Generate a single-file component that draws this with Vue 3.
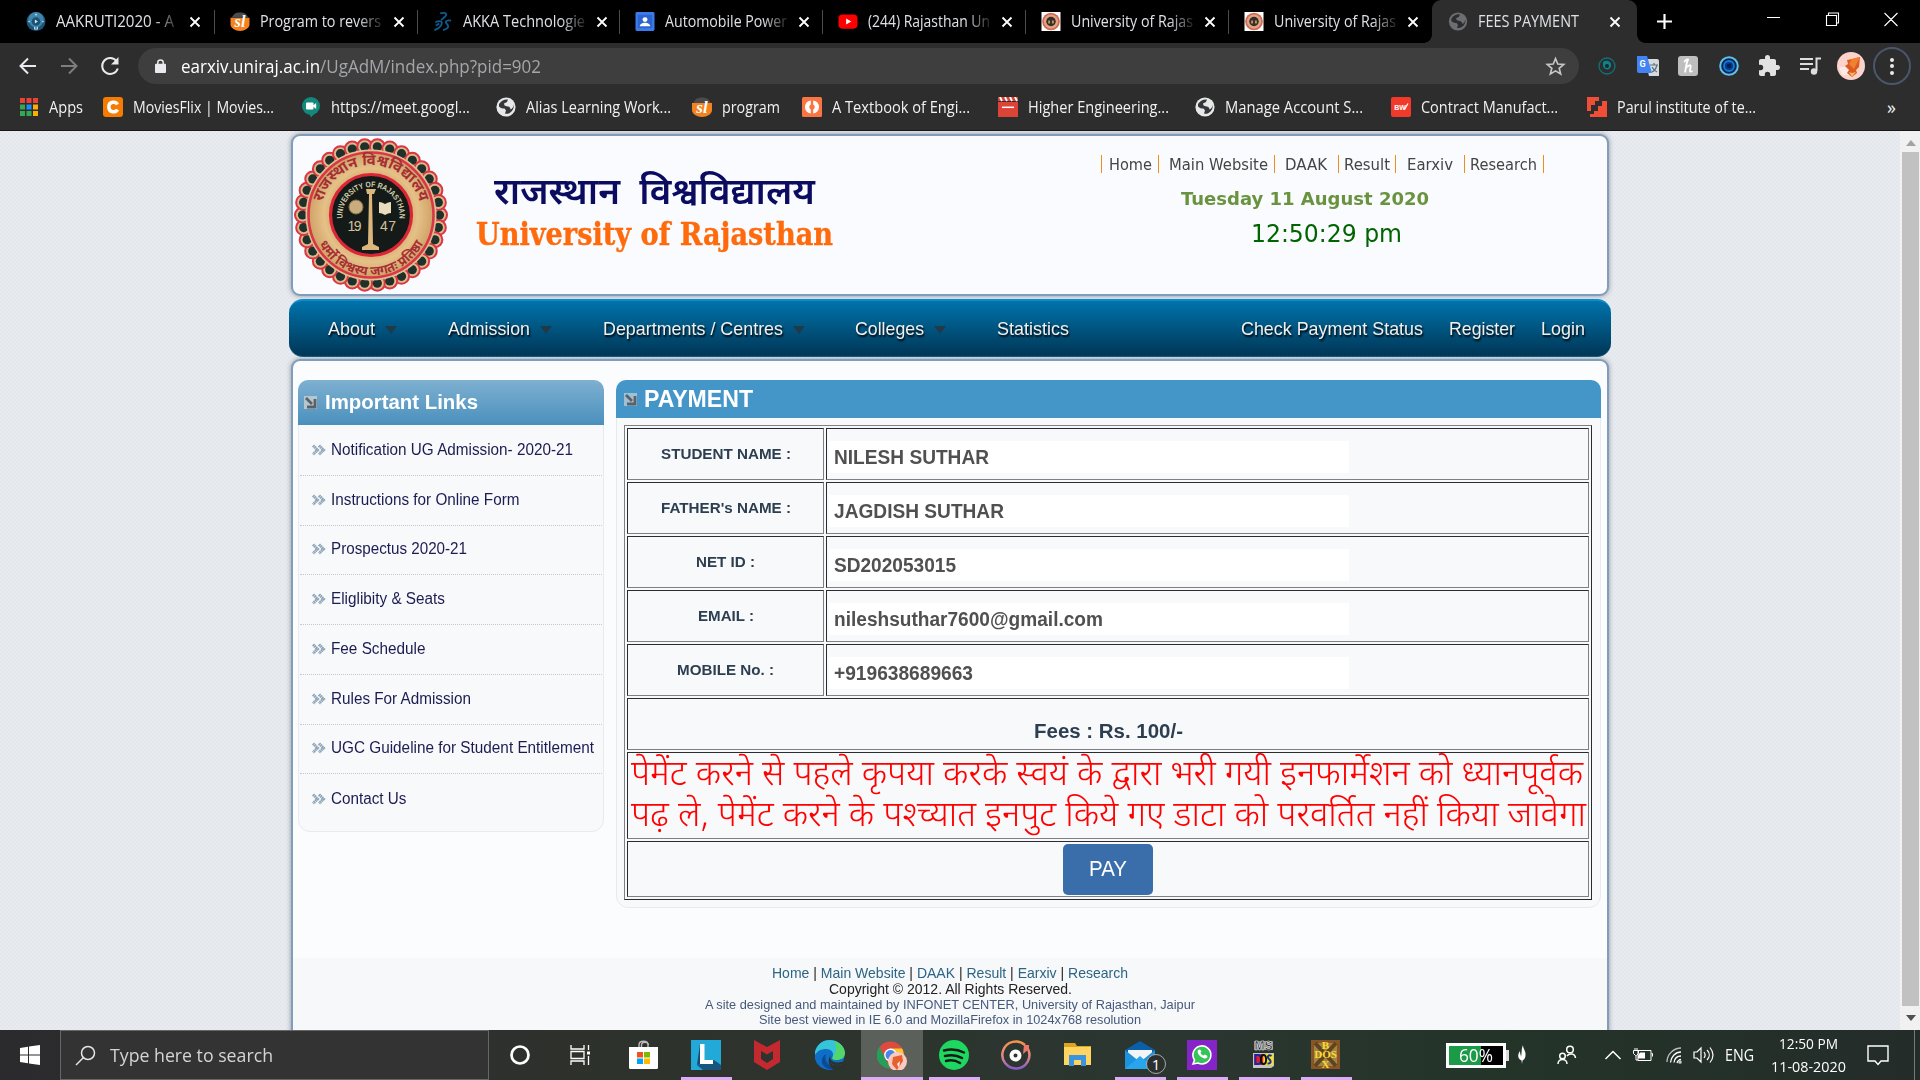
<script setup>
// Stretches a run of text horizontally so it occupies exactly the given width.
const vFit = {
  mounted(el, { value }) {
    el.style.display = 'inline-block'
    el.style.whiteSpace = 'nowrap'
    const natural = el.getBoundingClientRect().width
    if (!value || !natural) return
    el.style.transformOrigin = '0 50%'
    el.style.transform = `scaleX(${value / natural})`
    el.style.marginRight = `${value - natural}px`
  },
}

const globe = (bg, fg) =>
  `<circle cx="10" cy="10" r="9.6" fill="${bg}"/><path d="M3 7c2-3 5-5 9-4.500l-1 2.500-3 1.500.5 2 3 1c2 0 3 1.500 3 3 2-1 3-2.500 3.200-5 .5 3-.8 6.500-4 8.500-2 1-3.500 1-4.700.6l1-3-1.500-2c-2 0-4-.5-5.500-2.100z" fill="${fg}"/>`
const slIcon = `<path d="M0 6h20v7c0 4-5 7-10 7S0 17 0 13z" fill="#f58220"/><path d="M1 6 4 2c3-2 9-2 12 0l3 4z" fill="#4b4b4b"/><text x="10" y="16" text-anchor="middle" font-family="Liberation Serif" font-style="italic" font-weight="700" font-size="17" fill="#fff">sl</text>`
const sealIcon = `<rect width="20" height="20" fill="#fff"/><circle cx="10" cy="10" r="9.300" fill="#cf6a55"/><circle cx="10" cy="10" r="7.500" fill="#e0a583"/><circle cx="10" cy="10" r="5" fill="#3a2b24"/><path d="M7 9h2v3H7zM11 9h2v3h-2z" fill="#b09a70"/>`

const icons = {
  aakruti: `<circle cx="10" cy="10" r="10" fill="#1c5578"/><circle cx="10" cy="8" r="8" fill="#3f86ad"/><circle cx="10" cy="10" r="4.500" fill="#1d4f70"/><path d="M8.800 7.800 12 10l-3.200 2.200z" fill="#cfe6f2"/><path d="m10 1.500 1.500 2h-3zM2 9l2 1-2 1zM18 9l-2 1 2 1zM8 15.500h1.300v2h1.400v-2H12v3H8z" fill="#cfe6f2"/>`,
  sl: slIcon,
  ds: `<path d="M7 1.500c5-1.500 8 0 5.500 3L8 8.500M2 11c4-2.500 8-1.500 6.500 2-1 2.500-3.500 4.500-7.500 6M2.500 14.500 6 12M18.500 9c-5-.5-7 1-4.500 3.500s2 5-4 6.500" fill="none" stroke="#0d5a8c" stroke-width="1.900"/>`,
  contact: `<rect width="20" height="20" rx="1.500" fill="#3b7bea"/><rect x="2.500" y="3" width="15" height="14" fill="#2c63cf"/><circle cx="10" cy="8" r="2.600" fill="#fff"/><path d="M4.500 15c0-5 11-5 11 0z" fill="#fff"/>`,
  youtube: `<rect y="2.500" width="20" height="15" rx="4" fill="#f00"/><path d="m8 6.800 5.500 3.200L8 13.200z" fill="#fff"/>`,
  seal: sealIcon,
  globeDark: globe('#6b6f73', '#2d2d2d'),
  globe: globe('#e8e8e8', '#35373a'),
  apps: `<path fill="#ea4335" d="M1 1h5v5H1zM7.500 1h5v5h-5zM14 1h5v5h-5z"/><path fill="#34a853" d="M1 7.500h5v5H1zM1 14h5v5H1zM7.500 14h5v5h-5z"/><path fill="#1a8cff" d="M7.500 7.500h5v5h-5z"/><path fill="#fbaf05" d="M14 7.500h5v5h-5zM14 14h5v5h-5z"/>`,
  movies: `<rect width="20" height="20" rx="3" fill="#f57c00"/><path d="M14.500 7.600C12.800 4 5.800 4.200 5.800 10s7 6 8.700 2.400" fill="none" stroke="#fff" stroke-width="3.400"/>`,
  meet: `<circle cx="10" cy="9" r="9" fill="#12897b"/><path d="M8 16h6l-4 4.500z" fill="#12897b"/><rect x="5" y="5.500" width="7.500" height="7" rx="1" fill="#fff"/><path d="m12 8.500 3.200-2.500v6L12 9.500z" fill="#fff"/>`,
  textbook: `<rect width="20" height="20" rx="1.500" fill="#fb7542"/><path d="M8.800 3.500C1 4.500 1 15.500 8.800 16.500v-4c-2-.8-2-4.200 0-5zM11.200 3.500c7.800 1 7.800 12 0 13v-4c2-.8 2-4.200 0-5z" fill="#fff"/>`,
  higher: `<rect y="0" width="20" height="20" fill="#dc4437"/><path d="M0 4.500h20" stroke="#2d2d2d" stroke-width="1"/><path d="m2 0 2 4M7 0l2 4M12 0l2 4M17 0l2 4" stroke="#fff" stroke-width="1.800"/><path d="M4 10.300h12" stroke="#fff" stroke-width="1.500"/>`,
  bw: `<rect width="20" height="20" rx="2" fill="#f23a2a"/><text x="3.200" y="13" font-family="Liberation Sans" font-weight="700" font-size="7" fill="#fff">BW</text><path d="m13.500 12.500 3.500-6" stroke="#fff" stroke-width="1.200"/>`,
  parul: `<path d="M0 0h12v4H8v4H4v6H0zM20 4v16H3v-3h4v-3h4V9h4V4z" fill="#f04e37"/>`,
}

const tabs = [
  ['aakruti', 'AAKRUTI2020 - A', 118], ['sl', 'Program to revers', 121], ['ds', 'AKKA Technologie', 122],
  ['contact', 'Automobile Power', 122], ['youtube', '(244) Rajasthan Un', 122],
  ['seal', 'University of Rajas', 122], ['seal', 'University of Rajas', 122],
]
const bookmarks = [
  ['apps', 'Apps', 34, 84], ['movies', 'MoviesFlix | Movies...', 141, 198], ['meet', 'https://meet.googl...', 139, 195],
  ['globe', 'Alias Learning Work...', 145, 196], ['sl', 'program', 58, 110], ['textbook', 'A Textbook of Engi...', 138, 196],
  ['higher', 'Higher Engineering...', 141, 197], ['globe', 'Manage Account S...', 138, 196],
  ['bw', 'Contract Manufact...', 137, 196], ['parul', 'Parul institute of te...', 139, 170],
]
// text, text width, space before, space after (up to the divider)
const topLinks = [
  ['Home', 43, 7, 6], ['Main Website', 99, 10, 6], ['DAAK', 42, 10, 11],
  ['Result', 46, 5, 5], ['Earxiv', 46, 11, 11], ['Research', 67, 5, 6],
]
// text, width, full slot width including arrow and spacing
const menu = [['About', 47, 120], ['Admission', 82, 155], ['Departments / Centres', 180, 252], ['Colleges', 69, 142], ['Statistics', 72, 72]]
const menuRight = [['Check Payment Status', 182], ['Register', 66], ['Login', 44]]
const links = [
  ['Notification UG Admission- 2020-21', 242], ['Instructions for Online Form', 188.500], ['Prospectus 2020-21', 136],
  ['Eliglibity & Seats', 114], ['Fee Schedule', 94.500], ['Rules For Admission', 140],
  ['UGC Guideline for Student Entitlement', 263], ['Contact Us', 75.500],
]
const fields = [
  ['STUDENT NAME :', 130, 'NILESH SUTHAR', 155], ["FATHER's NAME :", 130, 'JAGDISH SUTHAR', 170],
  ['NET ID :', 59, 'SD202053015', 122], ['EMAIL :', 56, 'nileshsuthar7600@gmail.com', 269],
  ['MOBILE No. :', 97, '+919638689663', 139],
]
const notice = [
  ['पेमेंट करने से पहले कृपया करके स्वयं के द्वारा भरी गयी इनफार्मेशन को ध्यानपूर्वक', 952],
  ['पढ़ ले, पेमेंट करने के पश्\u200dच्यात इनपुट किये गए डाटा को परवर्तित नहीं किया जावेगा', 955],
]
const footLinks = ['Home', 'Main Website', 'DAAK', 'Result', 'Earxiv', 'Research']

const scallops = Array.from({ length: 34 }, (_, i) => {
  const a = (i / 34) * Math.PI * 2
  return { x: 78 + Math.cos(a) * 68.500, y: 78 + Math.sin(a) * 68.500 }
})

const appIcons = [
  { n: 'cortana', s: `<circle cx="15" cy="15" r="8.500" fill="none" stroke="#fff" stroke-width="2.700"/>` },
  { n: 'taskview', s: `<path d="M4 5v4h13V5M4 25v-4h13v4M4 11.500h13v7H4zM21.500 5v5M21.500 16v9" fill="none" stroke="#fff" stroke-width="1.300"/><path d="M20 11.500h3v3h-3z" fill="#fff"/>` },
  { n: 'store', s: `<path d="M10 7V5c0-5 9-5 9 0v2M12.500 7V5c0-4 7-3 7 0" fill="none" stroke="#bbb" stroke-width="1.400"/><path d="M0 7h29v20.500q0 1.500-1.500 1.500h-26Q0 29 0 27.500z" fill="#fff"/><path d="M8 12h6v5.500H8z" fill="#f25022"/><path d="M15 12h6v5.500h-6z" fill="#7fba00"/><path d="M8 18.500h6V24H8z" fill="#00a4ef"/><path d="M15 18.500h6V24h-6z" fill="#ffb900"/>` },
  { n: 'lms', s: `<path d="M0 0h30v30H0z" fill="#22a9d8"/><path d="m6 25 6 5h18V25l-7-5z" fill="#17557f"/><path d="M9 4h4.500v16H22v4H9z" fill="#fff"/><path d="M9 4v20l-3 1z" fill="#164a79"/>`, u: 1 },
  { n: 'mcafee', s: `<path d="M1 0 14 7 27 0v22L14 30 1 22zM8 11v8l6 4 6-4v-8l-6 3.500z" fill="#c4292f" fill-rule="evenodd"/>` },
  { n: 'edge', s: `<circle cx="14.500" cy="15" r="15" fill="#0f6fc6"/><path d="M0 12C2 4 8 0 14.500 0c9 0 15 6 15 13 0 5-4 7-9 7-3 0-4-1.500-3-3 2-4-1-8-6-8-6 0-9 2-11.500 6z" fill="#36c5d8"/><path d="M19 1c7 2 11 7 11 12 0 5-4 7-9 7-3 0-4-1.500-3-3C22 12 22 5 19 1z" fill="#52d66b"/><path d="M11 14c-3 9 6 16 15 11-6 8-17 4-19-2-1-4 1-7 4-9z" fill="#0b4a94"/><path d="M16 15c-3 5 3 10 14 6v9H20c-7-3-8-11-4-15z" fill="#2c322c"/><path d="M27 24c-3 2-11 2-13-4 2 6 8 6 13 4z" fill="#1173cc"/>` },
  { n: 'chrome', s: `<circle cx="13.500" cy="15" r="13.500" fill="#dd4b3e"/><path d="M2.500 7 9 20l4.500 8.500C1 28-4 15 2.500 7z" fill="#239f59"/><path d="M13.500 8.500H25c5 8-1 20-11.500 20l6-10z" fill="#f6c92f"/><circle cx="13.500" cy="15" r="6.400" fill="#fff"/><circle cx="13.500" cy="15" r="5" fill="#4a86ea"/><circle cx="20.500" cy="21.500" r="9.500" fill="#fac9c0"/><path d="m16 17 9-2 1 6-6 9-5-6z" fill="#e75f2c"/><path d="m20 24 3-3-1 7z" fill="#fff0ea"/>`, a: 1 },
  { n: 'spotify', s: `<circle cx="15" cy="15" r="15" fill="#1ed760"/><path d="M5 10.500c7-2 14-1 20 2M6 16c6-1.500 12-1 17 2M7 21c5-1.300 9-1 14 2" fill="none" stroke="#151a17" stroke-width="2.500" stroke-linecap="round"/>`, u: 1 },
  { n: 'groove', s: `<defs><linearGradient id="gr" x2="0" y2="1"><stop stop-color="#f79349"/><stop offset=".55" stop-color="#e28687"/><stop offset="1" stop-color="#895cc8"/></linearGradient></defs><path d="M24 5A13.500 13.500 0 1 0 27 9" fill="none" stroke="url(#gr)" stroke-width="2.500"/><path d="M23 5h5v4l-6 5z" fill="#ef776a"/><circle cx="14.500" cy="15.500" r="4" fill="none" stroke="#fff" stroke-width="4"/>` },
  { n: 'files', s: `<path d="M1 3h11l2 3h14v19H1z" fill="#dba522"/><path d="M1 7h27v18H1z" fill="#ffd461"/><path d="M6 26V15h17v11h-5v-6h-7v6z" fill="#3a95df"/>` },
  { n: 'mail', s: `<path d="M0 10 15 1l15 9v19H0z" fill="#0b5fa9"/><path d="M3 10h24v7l-12 8L3 17z" fill="#f2f4f5"/><path d="m0 10 15 12L30 10v19H0z" fill="#1d93de"/><path d="m0 29 15-13 15 13z" fill="#28a5ec"/>`, u: 1, b: 1 },
  { n: 'whatsapp', s: `<path d="M0 0h30v30H0z" fill="#8524c7"/><path d="m6 24 1.500-4A9 9 0 1 1 11 23z" fill="#36c357" stroke="#fff" stroke-width="1.600"/><path d="M11 10c-2 4 5 10 9 8l.5-2-2.500-1.500-1.500 1c-1.500-.5-2.500-1.500-3-3l1-1L13 9.500z" fill="#fff"/>`, u: 1 },
  { n: 'msdos', s: `<path d="M5 1h19v9H5z" fill="#8d8d8d"/><text x="14.500" y="10" text-anchor="middle" font-family="Liberation Sans" font-weight="700" font-size="12" fill="#111" stroke="#fff" stroke-width=".5">MS</text><path d="M4 13h21v13l-3 2H4z" fill="#c4c4c4"/><path d="M5 14h9.500v11H5z" fill="#ec1c24"/><path d="M14.500 14H24v11h-9.500z" fill="#ffe600"/><path d="M6.500 15h2.500c4 0 4 9 0 9H6.500z" fill="none" stroke="#0e2bb3" stroke-width="2"/><ellipse cx="14.500" cy="19.500" rx="2.600" ry="4.500" fill="none" stroke="#111" stroke-width="2"/><path d="M22.500 16c-3-2-5 1-2.500 3s2 5-1.500 4.500" fill="none" stroke="#0e2bb3" stroke-width="2"/>`, u: 1 },
  { n: 'dosbox', s: `<path d="M0 0h29v29H0z" fill="#8a5524"/><path d="M3 3h23v23H3z" fill="#a08345"/><path d="m4 3 21 23M25 3 4 26" stroke="#5d461f" stroke-width="4"/><g font-family="Liberation Serif" font-weight="700" fill="#ffd92e" text-anchor="middle"><text x="14.500" y="9" font-size="11">B</text><text x="14.500" y="18.300" font-size="11">DOS</text><text x="14.500" y="27.500" font-size="11">X</text></g>`, u: 1 },
]
</script>

<template>
  <div class="screen">
    <!-- tab strip -->
    <div class="tabs">
      <div v-for="(t, i) in tabs" :key="i" class="tab">
        <svg class="fav" viewBox="0 0 20 20" v-html="icons[t[0]]"></svg>
        <div class="tab-title"><span v-fit="t[2]">{{ t[1] }}</span></div>
        <svg class="x" viewBox="0 0 12 12"><path d="m1.500 1.500 9 9m0-9-9 9" /></svg>
      </div>
      <div class="tab active">
        <svg class="fav" viewBox="0 0 20 20" v-html="icons.globeDark"></svg>
        <div class="tab-title plain"><span v-fit="101">FEES PAYMENT</span></div>
        <svg class="x" viewBox="0 0 12 12"><path d="m1.500 1.500 9 9m0-9-9 9" /></svg>
      </div>
      <svg class="plus" viewBox="0 0 16 16"><path d="M8 0v16M0 8h16" /></svg>
      <svg class="win" width="133" height="16" viewBox="0 0 133 16">
        <path d="M1 6.500h13M60.500 4.500h10v10h-10zM62.500 4V2h10v10h-2M118.500 2l13 13m0-13-13 13" />
      </svg>
    </div>

    <!-- toolbar -->
    <div class="toolbar">
      <svg class="nav3" width="118" height="24" viewBox="0 0 118 24" fill="none" stroke-width="2">
        <path d="M26 12H11m7-7.500L10.500 12l7.500 7.500" stroke="#e8eaed" />
        <path d="M51 12h15m-7-7.500 7.500 7.500-7.500 7.500" stroke="#7c7e80" />
        <path d="M106.500 7a8 8 0 1 0 1.300 7.500" stroke="#e8eaed" /><path d="M108.500 3v7.500H101z" fill="#e8eaed" />
      </svg>
      <div class="omnibox">
        <svg class="lock" viewBox="0 0 12 15"><path d="M1 5h10q1 0 1 1v8q0 1-1 1H1q-1 0-1-1V6q0-1 1-1z" fill="#e8eaed" /><path d="M3 6V4c0-4 6-4 6 0v2" fill="none" stroke="#e8eaed" stroke-width="1.600" /></svg>
        <span v-fit="360" class="url"><b>earxiv.uniraj.ac.in</b>/UgAdM/index.php?pid=902</span>
        <svg class="star" viewBox="0 0 24 24"><path d="m12 3 2.600 6.200 6.800.5-5.200 4.300 1.700 6.600-5.900-3.600-5.900 3.600L7.800 14 2.600 9.700l6.800-.5z" /></svg>
      </div>
      <div class="exts">
        <svg viewBox="0 0 24 24"><circle cx="12" cy="12" r="8" fill="none" stroke="#12717a" stroke-width="1.300" /><path d="M8 8c4-3 9 0 8 4-1 5-7 4-8 0z" fill="#0d8288" /><circle cx="12" cy="12" r="2" fill="#0c2a33" /></svg>
        <svg viewBox="0 0 24 24"><path d="M9 5h12q2 0 2 2v15H13z" fill="#d5dade" /><path d="M1 2h10l5 17H3q-2 0-2-2z" fill="#4284f3" /><text x="3.500" y="13" font-family="Roboto" font-weight="700" font-size="9" fill="#fff">G</text><path d="M14 11h8m-4-2v2m3 0c-1 4-3 6-5 7m0-5c1 2 3 4 5 5" stroke="#5d7180" stroke-width="1.200" fill="none" /></svg>
        <svg viewBox="0 0 24 24"><rect x="2" y="2" width="20" height="20" rx="3" fill="#bebebe" /><path d="M9 18.500c1-5 1-9 3-13-2-1-3 2-4 2.500m1.500 6c3-3 6-4 5-.5s-1 5 2 3.500" stroke="#fff" stroke-width="1.800" fill="none" /></svg>
        <svg viewBox="0 0 24 24"><circle cx="12" cy="12" r="8.800" fill="#0a2740" stroke="#5fc0f2" stroke-width="2" /><circle cx="12" cy="12" r="5" fill="#063a8c" stroke="#1876e0" stroke-width="1.800" /><circle cx="12" cy="12" r="2.200" fill="#04203f" /></svg>
        <svg viewBox="0 0 24 24"><path d="M20.500 11H19V7c0-1.100-.9-2-2-2h-4V3.500a2.500 2.500 0 0 0-5 0V5H4c-1.100 0-2 .9-2 2v3.800h1.500a2.700 2.700 0 0 1 0 5.400H2V20c0 1.100.9 2 2 2h3.800v-1.500a2.700 2.700 0 0 1 5.400 0V22H17c1.100 0 2-.9 2-2v-4h1.500a2.500 2.500 0 0 0 0-5z" fill="#e2e2e2" /></svg>
        <svg viewBox="0 0 24 24"><path d="M2 5h13M2 10h13M2 15h9M18.500 17V4.500H23" fill="none" stroke="#dedede" stroke-width="2" /><circle cx="16" cy="17.500" r="3.200" fill="#dedede" /></svg>
      </div>
      <svg class="avatar" viewBox="0 0 28 28"><circle cx="14" cy="14" r="14" fill="#fbd3cb" /><path d="M2 15h12l2 8H5z" fill="#fde9e4" /><path d="m10 8 5-1 8-2-1 10-3 3 1 3-5 4-5-4 2-3-4-4 3-2z" fill="#dd5a25" /><path d="m15 7 8-2-6 12-5-5z" fill="#f0812f" /><path d="m12 20 3 1 4-1-4 5z" fill="#e9bb62" /></svg>
      <div class="kebab"><i></i><i></i><i></i></div>
    </div>

    <!-- bookmarks -->
    <div class="bookmarks">
      <div v-for="(b, i) in bookmarks" :key="i" class="bm" :style="{ width: b[3] + 'px' }">
        <svg viewBox="0 0 20 20" v-html="icons[b[0]]"></svg><span v-fit="b[2]">{{ b[1] }}</span>
      </div>
      <span class="more">»</span>
    </div>

    <!-- page -->
    <div class="viewport">
      <div class="page">
        <header class="banner">
          <svg class="seal" viewBox="0 0 156 156">
            <defs>
              <radialGradient id="gold"><stop offset=".5" stop-color="#c89a5e" /><stop offset=".75" stop-color="#e5c188" /><stop offset="1" stop-color="#cfa266" /></radialGradient>
              <path id="arcTop" d="M31 97A50.500 50.500 0 1 1 125 97" />
              <path id="arcBottom" d="M21 93A58.500 58.500 0 0 0 135 93" />
              <path id="arcInner" d="M50 84A28.500 28.500 0 1 1 106 84" />
            </defs>
            <circle v-for="(s, i) in scallops" :key="'a' + i" :cx="s.x" :cy="s.y" r="7.500" fill="#dcb988" stroke="#dc3545" stroke-width="2" />
            <circle v-for="(s, i) in scallops" :key="'b' + i" :cx="s.x" :cy="s.y" r="4.600" fill="#20302b" />
            <circle cx="78" cy="78" r="65.500" fill="#dfbf8f" />
            <circle cx="78" cy="78" r="62.500" fill="url(#gold)" stroke="#d93747" stroke-width="2.600" />
            <circle cx="78" cy="78" r="40.500" fill="#131a17" stroke="#dc2638" stroke-width="3.200" />
            <g fill="#a72e35" font-family="'Noto Sans Devanagari', 'Noto Sans', sans-serif" font-weight="700" font-size="15">
              <text text-anchor="middle"><textPath href="#arcTop" startOffset="50%">राजस्थान विश्वविद्यालय</textPath></text>
              <text text-anchor="middle" font-size="13"><textPath href="#arcBottom" startOffset="50%">धर्मो विश्वस्य जगतः प्रतिष्ठा</textPath></text>
            </g>
            <text fill="#d6cfae" font-family="Liberation Sans" font-weight="700" font-size="8" text-anchor="middle"><textPath href="#arcInner" startOffset="50%" textLength="95" lengthAdjust="spacingAndGlyphs">UNIVERSITY OF RAJASTHAN</textPath></text>
            <path d="M73 52h10l-2 5h-2l1 50 6 3v3H69v-3l6-3 1-50h-2z" fill="#dcb77d" />
            <circle cx="63" cy="70" r="7" fill="#c9ad7f" stroke="#8a724c" /><path d="M86 65q3 0 6 2 3-2 6-2v11q-3 0-6 2-3-2-6-2z" fill="#e9ddbd" />
            <g fill="#d3c09a" font-family="Liberation Sans" font-size="14"><text x="54.500" y="94" textLength="14">19</text><text x="87" y="94" textLength="16">47</text></g>
          </svg>
          <div class="names">
            <div class="hi"><span v-fit="321">राजस्थान&nbsp; विश्वविद्यालय</span></div>
            <div class="en"><span v-fit="357">University of Rajasthan</span></div>
          </div>
          <div class="meta">
            <nav class="top-links">
              <a v-for="l in topLinks" :key="l[0]" :style="{ paddingLeft: l[2] + 'px', paddingRight: l[3] + 'px' }"><span v-fit="l[1]">{{ l[0] }}</span></a>
            </nav>
            <div class="date"><span v-fit="248">Tuesday 11 August 2020</span></div>
            <div class="time"><span v-fit="151">12:50:29 pm</span></div>
          </div>
        </header>

        <nav class="menu">
          <div v-for="(m, i) in menu" :key="m[0]" class="mi" :style="{ width: m[2] + 'px' }">
            <span v-fit="m[1]">{{ m[0] }}</span><i v-if="i < 4" class="arrow"></i>
          </div>
          <div class="menu-right"><span v-for="m in menuRight" :key="m[0]"><span v-fit="m[1]">{{ m[0] }}</span></span></div>
        </nav>

        <main class="content">
          <div class="cols">
            <aside class="side">
              <h2><svg class="corner" viewBox="0 0 13 13"><path d="M0 0h13v13H0z" fill="#b4c6d0" /><path d="m2 2 6 6M11 3v8H3" fill="none" stroke="#5c6166" stroke-width="2.800" /></svg><span v-fit="153">Important Links</span></h2>
              <ul>
                <li v-for="l in links" :key="l[0]">
                  <svg viewBox="0 0 14 12"><path d="m1 1.500 4.500 4.500L1 10.500M7 1.500 11.500 6 7 10.500" fill="none" stroke="#8fa5b7" stroke-width="3" stroke-dasharray="1.600 .4" /></svg><span v-fit="l[1]">{{ l[0] }}</span>
                </li>
              </ul>
            </aside>
            <section class="pay">
              <h2><svg class="corner" viewBox="0 0 13 13"><path d="M0 0h13v13H0z" fill="#9fc0d3" /><path d="m2 2 6 6M11 3v8H3" fill="none" stroke="#5c6166" stroke-width="2.800" /></svg><span v-fit="109">PAYMENT</span></h2>
              <div class="table">
                <template v-for="f in fields" :key="f[0]">
                  <div class="cell label"><span v-fit="f[1]">{{ f[0] }}</span></div>
                  <div class="cell value"><div class="input"><span v-fit="f[3]">{{ f[2] }}</span></div></div>
                </template>
                <div class="cell wide fees"><span v-fit="149">Fees : Rs. 100/-</span></div>
                <div class="cell wide notice"><div v-for="n in notice" :key="n[1]"><span v-fit="n[1]">{{ n[0] }}</span></div></div>
                <div class="cell wide action"><button><span v-fit="38">PAY</span></button></div>
              </div>
            </section>
          </div>
          <footer>
            <div class="f1"><span v-fit="356"><template v-for="(l, i) in footLinks" :key="l"><template v-if="i"> | </template><a>{{ l }}</a></template></span></div>
            <div class="f2"><span v-fit="243">Copyright © 2012. All Rights Reserved.</span></div>
            <div class="f3"><span v-fit="490">A site designed and maintained by INFONET CENTER, University of Rajasthan, Jaipur</span></div>
            <div class="f3"><span v-fit="382">Site best viewed in IE 6.0 and MozillaFirefox in 1024x768 resolution</span></div>
          </footer>
        </main>
      </div>
      <div class="scroll"><i class="up"></i><div class="thumb"></div><i class="down"></i></div>
    </div>

    <!-- taskbar -->
    <div class="taskbar">
      <div class="start"><svg width="20" height="20" viewBox="0 0 20 20"><path d="m0 3 8-1.200v7.700H0zM9 1.600 20 0v9.500H9zM0 10.500h8v7.700L0 17zM9 10.500h11V20L9 18.400z" fill="#fff" /></svg></div>
      <div class="search">
        <svg width="21" height="21" viewBox="0 0 21 21"><circle cx="13" cy="8" r="6.500" fill="none" stroke="#e6e6e6" stroke-width="1.500" /><path d="M8.500 12.500 1 20" stroke="#e6e6e6" stroke-width="1.500" /></svg>
        <span v-fit="163">Type here to search</span>
      </div>
      <div v-for="a in appIcons" :key="a.n" class="app" :class="{ on: a.a, open: a.u }">
        <svg width="30" height="30" viewBox="0 0 30 30" v-html="a.s"></svg><b v-if="a.b">1</b>
      </div>
      <div class="tray">
        <div class="batt"><span v-fit="34">60%</span></div>
        <svg class="leaf" width="10" height="20" viewBox="0 0 10 20"><path d="M6 0c0 4 3 6 2.500 10 0 3-1.500 5-3 5.500L5 19l-.5-3.500C1 14 0 10 3 6c0 3 1 4 1 6 1-4 0-8 2-12z" fill="#fff" /></svg>
        <svg class="people" width="20" height="20" viewBox="0 0 20 20" fill="none" stroke="#fff" stroke-width="1.500"><circle cx="13" cy="4.500" r="3.300" /><circle cx="5.500" cy="11" r="2.800" /><path d="M1 19c0-6 9-6 9 0M10 11c2-3 8-3 8.500 2" /></svg>
        <svg class="chev" width="18" height="10" viewBox="0 0 18 10" fill="none" stroke="#fff" stroke-width="1.500"><path d="m1.500 9 7.500-7.500L16.500 9" /></svg>
        <svg class="plug" width="20" height="14" viewBox="0 0 20 14" fill="none" stroke="#fff"><path d="M5 2.500h13v10H5zM18.500 5.500h1v3M2 0v2m2-2v2M.5 2.500h5v3l-2 2h-1l-2-2zM3 8v4h2" /><path d="M7 4.500h5v6H5v-3z" fill="#fff" stroke="none" /></svg>
        <svg class="wifi" width="17" height="18" viewBox="0 0 17 18" fill="none" stroke="#bbb" stroke-width="1.300"><path d="M1 16C1 8 8 2 15 2" /><path d="M4.500 16.500C5 11 9 6 15 6M8 16.500c.5-3.500 3-6.500 7-6.500M11 17c.3-1.500 2-3.500 4-3.500" stroke="#fff" /><circle cx="14" cy="16" r="1.200" fill="#fff" /></svg>
        <svg class="vol" width="21" height="18" viewBox="0 0 21 18" fill="none" stroke="#fff" stroke-width="1.200"><path d="M1 6h3l4-4v14l-4-4H1zM11 6c1.500 2 1.500 4 0 6M14 4c3 3 3 7 0 10M17 1.500c4 5 4 10 0 15" /></svg>
        <span class="eng"><span v-fit="29">ENG</span></span>
        <div class="clock"><div><span v-fit="59">12:50 PM</span></div><div><span v-fit="75">11-08-2020</span></div></div>
        <svg class="note" width="22" height="21" viewBox="0 0 22 21"><path d="M1 1h20v15h-7l-3 3.500L8 16H1z" fill="none" stroke="#fff" stroke-width="1.400" /></svg>
        <div class="edge"></div>
      </div>
    </div>
  </div>
</template>

<style>
body { margin: 0; overflow: hidden; }
</style>

<style scoped>
* { box-sizing: border-box; }
.screen { width: 1920px; height: 1080px; display: flex; flex-direction: column; overflow: hidden; font-family: "Open Sans", "Noto Sans", sans-serif; background: #000; }
svg { flex: none; display: block; }

.tabs { height: 43px; display: flex; background: #000; padding-left: 12px; color: #dfe1e5; font-size: 16.500px; }
.tab { width: 202.800px; flex: none; display: flex; align-items: center; padding-left: 15px; position: relative; }
.tab:first-child { padding-left: 14px; }
.tab:not(.active)::after { content: ""; position: absolute; right: 0; top: 10px; width: 1px; height: 24px; background: #4c4c4c; }
.tab:nth-child(7)::after { display: none; }
.fav { width: 20px; height: 19px; }
.tab-title { width: 122px; margin-left: 10px; overflow: hidden; white-space: nowrap; line-height: 26px; margin-top: -1px; -webkit-mask-image: linear-gradient(90deg, #000 80%, rgba(0,0,0,.15)); mask-image: linear-gradient(90deg, #000 80%, rgba(0,0,0,.15)); }
.tab-title.plain { -webkit-mask-image: none; mask-image: none; }
.x { width: 12px; height: 12px; margin-left: 11px; fill: none; stroke: #fff; stroke-width: 1.800; }
.tab.active { width: 205px; background: #2d2d2d; border-radius: 9px 9px 0 0; padding-left: 16px; margin-right: 20px; }
.active .x { margin-left: 9px; }
.active::before, .active::after { content: ""; position: absolute; bottom: 0; width: 8px; height: 8px; }
.active::before { left: -8px; background: radial-gradient(circle at 0 0, transparent 7.500px, #2d2d2d 8px); }
.active::after { right: -8px; background: radial-gradient(circle at 100% 0, transparent 7.500px, #2d2d2d 8px); }
.plus { width: 15px; height: 15px; margin: 14px 0 0; stroke: #fff; stroke-width: 2.300; }
.win { margin: 11px 21px 0 auto; fill: none; stroke: #fff; stroke-width: 1.100; }

.toolbar { height: 46px; background: #2d2d2d; display: flex; align-items: center; padding-left: 10px; }
.nav3 { margin-right: 10px; }
.omnibox { width: 1441px; height: 36px; border-radius: 18px; background: #3e3e3e; display: flex; align-items: center; padding: 0 13px 0 17px; margin-top: 0; }
.lock { width: 11px; height: 14px; margin-right: 15px; }
.url { font-size: 19px; color: #a4a6a9; line-height: 26px; margin-top: -1px; }
.url b { font-weight: 400; color: #fff; }
.star { width: 21px; height: 21px; margin-left: auto; fill: none; stroke: #c4c6c9; stroke-width: 1.900; }
.exts { display: flex; gap: 16.600px; margin-left: 16px; }
.exts svg { width: 24px; height: 24px; }
.avatar { width: 28px; height: 28px; margin-left: 15px; }
.kebab { width: 38px; height: 38px; border: 2px solid #4a566b; border-radius: 50%; margin-left: 8px; display: flex; flex-direction: column; align-items: center; justify-content: center; gap: 2.500px; }
.kebab i { width: 4px; height: 4px; border-radius: 50%; background: #e8eaed; }

.bookmarks { height: 42px; background: #2d2d2d; border-bottom: 1px solid #1a1518; display: flex; align-items: center; padding: 0 24px 6px 19px; color: #f1f1f1; font-size: 16px; }
.bm { display: flex; align-items: center; flex: none; }
.bm svg { width: 20px; height: 20px; margin-right: 10px; }
.more { margin-left: auto; font-size: 18px; }

.viewport { height: 899px; display: flex; background-color: #e6e9ee; background-image: conic-gradient(#e3e7ec 25%, #e8ebf0 0 50%, #e3e7ec 0 75%, #e8ebf0 0); background-size: 4px 4px; overflow: hidden; }
.page { width: 1322px; margin-left: 289px; padding-top: 3px; font-family: "Liberation Sans", Arial, sans-serif; }
.banner { height: 162px; margin: 0 2px; border: 2px solid #829dbb; border-radius: 9px; background: #f9fbfe; box-shadow: 0 0 5px rgba(70,80,90,.55); display: flex; }
.seal { width: 156px; height: 156px; margin: 1px 0 0 0; }
.names { margin-left: 28px; width: 360px; padding-top: 35px; }
.hi { padding-left: 17px; font: 600 37px/48px "Noto Sans Devanagari", "Noto Sans", sans-serif; color: #0b0b60; height: 43px; }
.en { font: 700 31px/40px "DejaVu Serif", serif; color: #ff6a0c; height: 42px; -webkit-text-stroke: .4px #ff6a0c; margin-left: -1px; }
.meta { margin-left: 264px; font-family: "DejaVu Sans", Verdana, sans-serif; }
.top-links { display: flex; border-left: 1px solid #f08c1e; margin: 19px 0 0 0; height: 18px; width: max-content; }
.top-links a { border-right: 1px solid #f08c1e; display: block; font-size: 15.500px; line-height: 20px; color: #444; flex: none; white-space: nowrap; }
.date { margin: 15px 0 0 80px; font-size: 18px; font-weight: 700; line-height: 22px; color: #6a9340; }
.time { margin: 10px 0 0 150px; font-size: 24px; line-height: 28px; color: #006400; }

.menu { height: 58px; margin-top: 3px; border-radius: 14px; border-top: 2px solid #0b8dca; border-bottom: 1px solid #0c5c85; background: linear-gradient(#0073ab, #00395a 95%); display: flex; align-items: center; padding-left: 39px; color: #f0f0f0; font-size: 19px; text-shadow: 1px 2px 2px #000; }
.mi { display: flex; align-items: center; flex: none; }
.arrow { border: 6px solid transparent; border-top: 8px solid #203a48; border-bottom: 0; margin-left: 10px; margin-top: 2px; }
.menu-right { margin-left: auto; padding-right: 26px; display: flex; gap: 26px; }

.content { margin: 2px 2px 0; height: 690px; border: 2px solid #829dbb; border-radius: 9px; background: #fbfcfe; box-shadow: 0 0 5px rgba(70,80,90,.55); display: flex; flex-direction: column; }
.cols { height: 597px; padding: 19px 6px 0 5px; display: flex; gap: 12px; align-items: flex-start; }
h2 { margin: 0; color: #fff; display: flex; align-items: center; }
.corner { width: 13px; height: 13px; }
.side { width: 306px; height: 452px; border: 1px solid #e6ebef; border-radius: 12px; background: #f8f9fb; }
.side h2 { height: 45px; margin: -1px -1px 0; border-radius: 10px 10px 0 0; background: linear-gradient(#7eb0d1, #4a90bd); font-size: 21px; padding: 0 0 1px 6px; }
.side .corner { margin-right: 8px; }
.pay .corner { margin-right: 7px; }
ul { list-style: none; margin: 0; padding: 1px 1px 0; }
li { height: 49.750px; border-bottom: 1px dotted #c3c9ce; display: flex; align-items: center; font-size: 15.800px; color: #1c1c52; padding: 0 0 1px 12px; }
li:last-child { border: 0; }
li svg { width: 14px; height: 12px; margin-right: 5px; }
.pay { flex: none; width: 985px; height: 528px; border: 1px solid #e6ebef; border-radius: 12px; background: #f8f9fb; }
.pay h2 { height: 38px; margin: -1px -1px 0; border-radius: 10px 10px 0 0; background: #4596c8; font-size: 23.500px; padding-left: 8px; }
.table { margin: 7px 8px 0 7px; border: 1px solid; border-color: #808084 #2c2c30 #2c2c30 #808084; padding: 2px; display: grid; grid-template-columns: 197px 1fr; gap: 2px; height: 475px; grid-template-rows: repeat(6, 52px) 87px 56px; }
.cell { border: 1px solid; border-color: #2c2c30 #808084 #808084 #2c2c30; font-weight: 700; min-width: 0; }
.label { color: #2c3e50; font-size: 15.500px; text-align: center; line-height: 50px; }
.value { padding: 12px 0 0 2px; }
.input { width: 520px; height: 32px; background: #fff; color: #505050; font-size: 19.500px; line-height: 33px; padding-left: 5px; }
.wide { grid-column: 1 / 3; text-align: center; }
.fees { font-size: 20px; line-height: 64px; color: #2c3e50; }
.notice { color: #f00; font: 300 34.500px/46px "Noto Sans Devanagari", "Noto Sans", sans-serif; text-align: left; padding: 1px 0 0 3px; }
.notice div { height: 40.500px; }
.action { display: flex; justify-content: center; padding-top: 2px; }
button { width: 90px; height: 51px; border: 0; border-radius: 5px; background: #3a6eaa; color: #fff; font: 21.500px "Liberation Sans", sans-serif; padding: 0; }
footer { flex: 1; background: #f7f8fa; text-align: center; padding-top: 7px; color: #222; }
.f1 { font-size: 14.800px; line-height: 16px; height: 16px; }
.f1 a { color: #2c6585; }
.f2 { font-size: 14.800px; line-height: 16px; height: 16px; }
.f3 { font-size: 13.300px; line-height: 16px; height: 15px; color: #45597a; }
.scroll { margin-left: auto; width: 20px; background: #f1f1f1; display: flex; flex-direction: column; align-items: center; padding: 9px 0 9px 1px; }
.up { border: 5px solid transparent; border-bottom: 6px solid #a3a3a3; border-top: 0; }
.thumb { width: 17px; height: 854px; background: #c1c1c1; margin: 6px 0 9px; }
.down { border: 5px solid transparent; border-top: 6px solid #505050; border-bottom: 0; }

.taskbar { height: 50px; display: flex; background: linear-gradient(90deg, #2b2b2d, #2e322c 35%, #2b3630 60%, #243429 78%, #242c2a); color: #fff; }
.start { width: 60px; display: flex; align-items: center; padding-left: 20px; }
.search { width: 429px; border: 1px solid #666; background: #333; display: flex; align-items: center; padding-left: 14px; gap: 14px; font-size: 19px; color: #d4d4d4; }
.app { width: 62px; flex: none; position: relative; display: flex; justify-content: center; align-items: center; }
.app.on { background: #5b605b; }
.app.open::after, .app.on::after { content: ""; position: absolute; bottom: 0; left: 6px; right: 5px; height: 3px; background: #dcabf7; }
.app.on::after { left: 0; right: 0; }
.app b { position: absolute; left: 37px; top: 24px; width: 20px; height: 20px; border: 1px solid #aaa; border-radius: 50%; background: #2b302e; font: 15px/18px "Open Sans", sans-serif; text-align: center; }
.tray { flex: 1; display: flex; align-items: center; padding-left: 89px; }
.batt { position: relative; width: 60px; height: 25px; border: 3px solid #fff; background: linear-gradient(90deg, #1b9a48 60%, #000 0); font-size: 17.500px; line-height: 18px; padding-left: 10px; }
.batt::after { content: ""; position: absolute; right: -6px; top: 4px; width: 3px; height: 11px; background: #ddd; }
.leaf { margin-left: 11px; }
.people { margin-left: 30px; }
.chev { margin-left: 27px; }
.plug { margin-left: 11px; }
.wifi { margin-left: 13px; }
.vol { margin-left: 10px; }
.eng { margin-left: 11px; font-size: 16px; }
.clock { width: 76px; margin-left: 16px; text-align: center; font-size: 15px; line-height: 23px; }
.clock div { height: 23px; }
.note { margin-left: 21px; }
.edge { width: 1px; height: 50px; background: #77797a; margin-left: auto; margin-right: 5px; }
</style>
